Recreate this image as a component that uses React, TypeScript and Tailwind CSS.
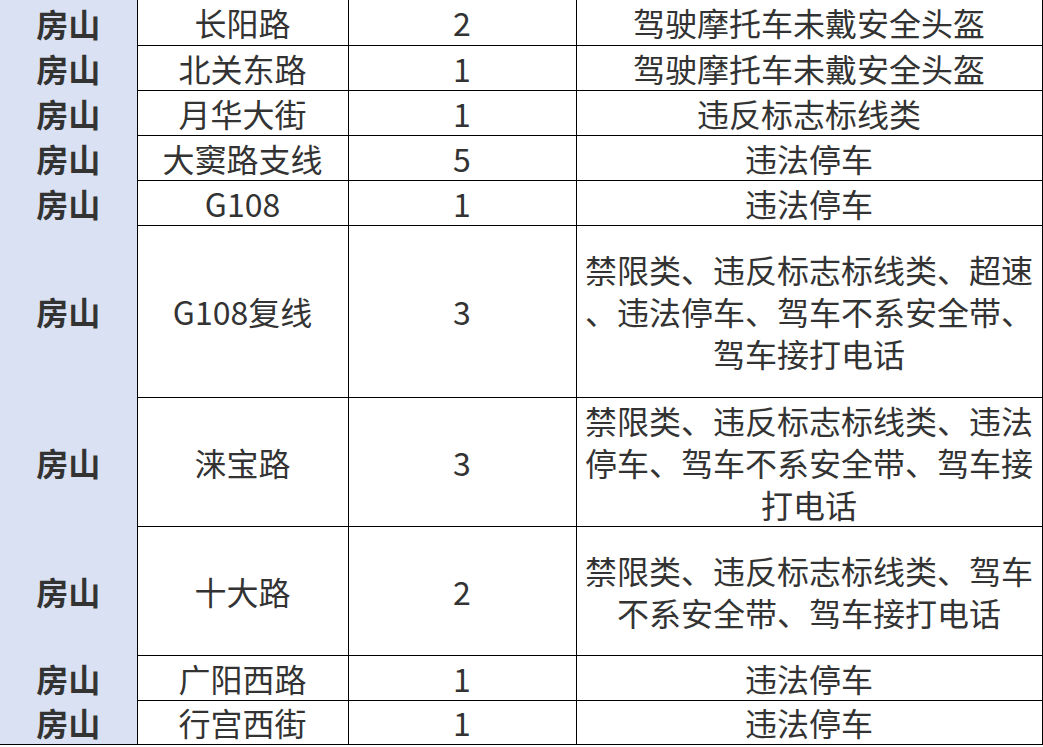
import React from 'react';

type Row = { road: string; count: string; kind: React.ReactNode; h: string };

const rows: Row[] = [
  { road: '长阳路', count: '2', kind: '驾驶摩托车未戴安全头盔', h: 'h-[45px]' },
  { road: '北关东路', count: '1', kind: '驾驶摩托车未戴安全头盔', h: 'h-[45px]' },
  { road: '月华大街', count: '1', kind: '违反标志标线类', h: 'h-[45px]' },
  { road: '大窦路支线', count: '5', kind: '违法停车', h: 'h-[45px]' },
  { road: 'G108', count: '1', kind: '违法停车', h: 'h-[45px]' },
  {
    road: 'G108复线',
    count: '3',
    kind: (
      <>
        禁限类、违反标志标线类、超速
        <br />
        、违法停车、驾车不系安全带、
        <br />
        驾车接打电话
      </>
    ),
    h: 'h-[172px]',
  },
  {
    road: '涞宝路',
    count: '3',
    kind: (
      <>
        禁限类、违反标志标线类、违法
        <br />
        停车、驾车不系安全带、驾车接
        <br />
        打电话
      </>
    ),
    h: 'h-[129px]',
  },
  {
    road: '十大路',
    count: '2',
    kind: (
      <>
        禁限类、违反标志标线类、驾车
        <br />
        不系安全带、驾车接打电话
      </>
    ),
    h: 'h-[129px]',
  },
  { road: '广阳西路', count: '1', kind: '违法停车', h: 'h-[45px]' },
  { road: '行宫西街', count: '1', kind: '违法停车', h: 'h-[44px]' },
];

export default function App() {
  return (
    <div className="w-[1043px] h-[747px] bg-white overflow-hidden">
      <table
        className="w-[1042px] table-fixed border-collapse text-[32px] leading-[42px] text-[#333333] text-center"
        style={{ fontFamily: '"Noto Sans CJK SC", "Noto Sans", sans-serif' }}
      >
        <colgroup>
          <col className="w-[137px]" />
          <col className="w-[211px]" />
          <col className="w-[228px]" />
          <col className="w-[466px]" />
        </colgroup>
        <tbody>
          {rows.map((r, i) => {
            const last = i === rows.length - 1;
            return (
              <tr key={i} className={r.h}>
                <td
                  className={
                    'p-0 bg-[#d9e1f2] font-bold border-r border-black ' +
                    (last ? 'border-b' : '')
                  }
                >
                  房山
                </td>
                <td className="p-0 border-b border-r border-black">{r.road}</td>
                <td className="p-0 border-b border-r border-black">{r.count}</td>
                <td className="p-0 border-b border-r border-black">{r.kind}</td>
              </tr>
            );
          })}
        </tbody>
      </table>
    </div>
  );
}
